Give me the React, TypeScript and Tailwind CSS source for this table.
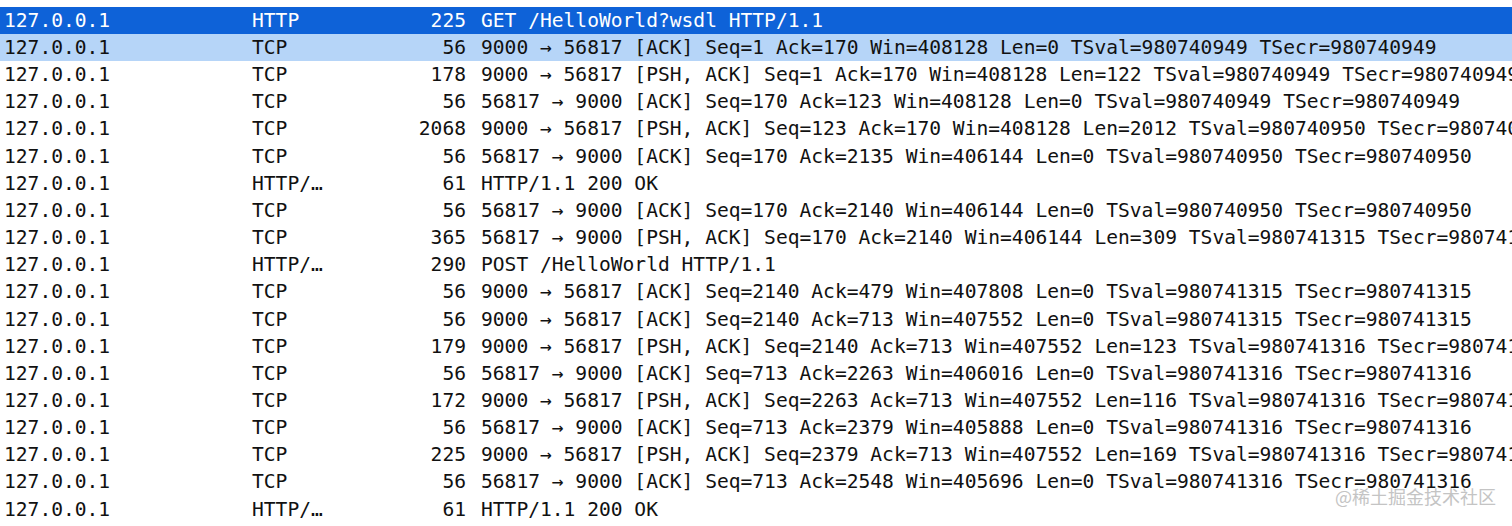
const ROWS: [string, string, string][] = [
  ["HTTP", "225", "GET /HelloWorld?wsdl HTTP/1.1"],
  ["TCP", "56", "9000 → 56817 [ACK] Seq=1 Ack=170 Win=408128 Len=0 TSval=980740949 TSecr=980740949"],
  ["TCP", "178", "9000 → 56817 [PSH, ACK] Seq=1 Ack=170 Win=408128 Len=122 TSval=980740949 TSecr=980740949"],
  ["TCP", "56", "56817 → 9000 [ACK] Seq=170 Ack=123 Win=408128 Len=0 TSval=980740949 TSecr=980740949"],
  ["TCP", "2068", "9000 → 56817 [PSH, ACK] Seq=123 Ack=170 Win=408128 Len=2012 TSval=980740950 TSecr=980740950"],
  ["TCP", "56", "56817 → 9000 [ACK] Seq=170 Ack=2135 Win=406144 Len=0 TSval=980740950 TSecr=980740950"],
  ["HTTP/…", "61", "HTTP/1.1 200 OK"],
  ["TCP", "56", "56817 → 9000 [ACK] Seq=170 Ack=2140 Win=406144 Len=0 TSval=980740950 TSecr=980740950"],
  ["TCP", "365", "56817 → 9000 [PSH, ACK] Seq=170 Ack=2140 Win=406144 Len=309 TSval=980741315 TSecr=980741315"],
  ["HTTP/…", "290", "POST /HelloWorld HTTP/1.1"],
  ["TCP", "56", "9000 → 56817 [ACK] Seq=2140 Ack=479 Win=407808 Len=0 TSval=980741315 TSecr=980741315"],
  ["TCP", "56", "9000 → 56817 [ACK] Seq=2140 Ack=713 Win=407552 Len=0 TSval=980741315 TSecr=980741315"],
  ["TCP", "179", "9000 → 56817 [PSH, ACK] Seq=2140 Ack=713 Win=407552 Len=123 TSval=980741316 TSecr=980741316"],
  ["TCP", "56", "56817 → 9000 [ACK] Seq=713 Ack=2263 Win=406016 Len=0 TSval=980741316 TSecr=980741316"],
  ["TCP", "172", "9000 → 56817 [PSH, ACK] Seq=2263 Ack=713 Win=407552 Len=116 TSval=980741316 TSecr=980741316"],
  ["TCP", "56", "56817 → 9000 [ACK] Seq=713 Ack=2379 Win=405888 Len=0 TSval=980741316 TSecr=980741316"],
  ["TCP", "225", "9000 → 56817 [PSH, ACK] Seq=2379 Ack=713 Win=407552 Len=169 TSval=980741316 TSecr=980741316"],
  ["TCP", "56", "56817 → 9000 [ACK] Seq=713 Ack=2548 Win=405696 Len=0 TSval=980741316 TSecr=980741316"],
  ["HTTP/…", "61", "HTTP/1.1 200 OK"],
];

function PacketRow({ row, index }: { row: [string, string, string]; index: number }) {
  const [proto, len, info] = row;
  const tone =
    index === 0
      ? "bg-[#0e62d8] text-white"
      : index === 1
        ? "bg-[#b6d5f8] text-[#111]"
        : "bg-white text-[#111]";
  return (
    <div className={`flex h-[27.17px] items-center whitespace-nowrap pl-[4px] ${tone}`}>
      <span className="w-[248px] shrink-0">127.0.0.1</span>
      <span className="w-[150px] shrink-0">{proto}</span>
      <span className="w-[64px] shrink-0 text-right">{len}</span>
      <span className="ml-[15px]">{info}</span>
    </div>
  );
}

export default function App() {
  return (
    <div className="relative h-[526px] w-[1512px] overflow-hidden bg-white pt-[7px] font-['DejaVu_Sans_Mono',monospace] text-[19.6px] leading-none">
      {ROWS.map((row, i) => (
        <PacketRow key={i} row={row} index={i} />
      ))}

      {/* watermark */}
      <div className="absolute left-[1335px] top-[487px] font-['Noto_Sans_CJK_SC',sans-serif] text-[18px] leading-none text-[#c4c4c4]">
        @稀土掘金技术社区
      </div>
    </div>
  );
}
